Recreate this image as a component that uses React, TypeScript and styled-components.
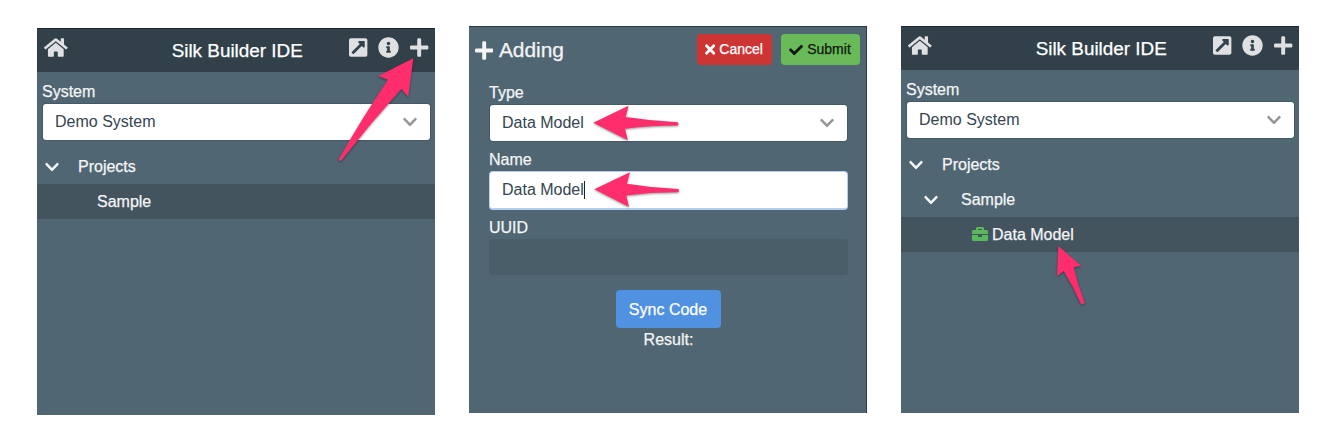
import React from "react";
import styled, { createGlobalStyle } from "styled-components";
import {
  FaHome,
  FaExternalLinkSquareAlt,
  FaInfoCircle,
  FaPlus,
  FaChevronDown,
  FaTimes,
  FaCheck,
  FaBriefcase,
} from "react-icons/fa";

const GlobalStyle = createGlobalStyle`
  *, *::before, *::after { box-sizing: border-box; }
  body {
    margin: 0;
    background: #fff;
    font-family: "Liberation Sans", Arial, sans-serif;
    font-size: 16px;
    -webkit-font-smoothing: antialiased;
    -webkit-text-stroke: 0.25px currentColor;
  }
`;

const Page = styled.main`
  position: relative;
  display: flex;
  align-items: flex-start;
  gap: 34px;
  width: 1326px;
  height: 442px;
  padding: 26px 27px 0 37px;
  overflow: hidden;
`;

const Panel = styled.section<{ $drop?: number; $edge?: boolean }>`
  flex: none;
  width: 398px;
  height: 387px;
  margin-top: ${(p) => p.$drop ?? 0}px;
  background: #506673;
  color: #f4f5f6;
  box-shadow: inset ${(p) => (p.$edge ? "-1px" : "0")} 1px 0 #2b383f;
`;

const TitleBar = styled.header`
  display: grid;
  grid-template-columns: 1fr auto 1fr;
  align-items: center;
  height: 44px;
  padding: 0 6.5px 7px 7px;
  border-top: 1px solid #1b262d;
  background: #324149;
  color: #dfe0e1;

  svg { display: block; }
`;

const Title = styled.h1`
  margin: 7px 0 0 2px;
  color: #fff;
  font-size: 18.9px;
  font-weight: 400;
  line-height: 24px;
`;

const Actions = styled.div`
  display: flex;
  justify-content: flex-end;
  gap: 10.8px;
`;

const SystemField = styled.div`
  padding: 8px 5px 9px 6px;
`;

const Label = styled.div<{ $shift?: number; $height?: number }>`
  height: ${(p) => p.$height ?? 24}px;
  margin-left: ${(p) => p.$shift ?? 0}px;
  line-height: 24px;
`;

const Select = styled.div`
  display: flex;
  align-items: center;
  justify-content: space-between;
  height: 36px;
  padding: 0 13.5px 0 12px;
  border-radius: 3px;
  background: #fff;
  box-shadow: 0 0 0 1px rgba(50, 65, 73, 0.35);
  color: #34454f;
  line-height: 35px;
  -webkit-text-stroke: 0;

  span { height: 36px; }
  svg { color: #939698; }
`;

const TreeRow = styled.div<{ $level: number; $selected?: boolean }>`
  display: flex;
  align-items: center;
  height: 35px;
  padding-left: ${(p) => 8 + p.$level * 15}px;
  background: ${(p) => (p.$selected ? "#43545f" : "transparent")};
  line-height: 35px;
`;

const Twisty = styled.span<{ $level: number }>`
  display: flex;
  align-items: center;
  width: ${(p) => 33 + p.$level * 4}px;
  height: 32px;
`;

const ModelIcon = styled(FaBriefcase)`
  margin: 0 4px 1px 26px;
  color: #58b85a;
`;

const FormBar = styled.header`
  display: flex;
  align-items: flex-start;
  height: 55px;
  padding: 8px 7px 0 6px;
`;

const FormTitle = styled.h2`
  display: flex;
  align-items: center;
  flex: 1;
  gap: 5.5px;
  height: 32px;
  margin: 0;
  font-size: 20.9px;
  font-weight: 400;
`;

const SmallButton = styled.button<{ $bg: string; $fg: string; $width: number }>`
  display: flex;
  align-items: center;
  justify-content: center;
  gap: 4px;
  width: ${(p) => p.$width}px;
  height: 31px;
  margin-left: 9px;
  padding: 0 0 0 0;
  border: 0;
  border-radius: 4px;
  background: ${(p) => p.$bg};
  color: ${(p) => p.$fg};
  font: 14px/31px "Liberation Sans", Arial, sans-serif;

  svg { margin-left: -1px; }
`;

const Form = styled.div`
  display: flex;
  flex-direction: column;
  padding: 0 19px 0 20px;

  ${Select} { margin: 0 1px 7px; }
`;

const Input = styled.div`
  display: flex;
  align-items: center;
  height: 39px;
  margin-bottom: 6px;
  padding: 0 12px 1px;
  border: 1px solid #b4cff0;
  border-bottom-width: 2px;
  border-radius: 4px;
  background: #fff;
  color: #34454f;
  -webkit-text-stroke: 0;
`;

const Caret = styled.i`
  width: 1px;
  height: 18px;
  background: #222;
`;

const Disabled = styled.div`
  height: 36px;
  border-radius: 4px;
  background: #4a5e6a;
`;

const SyncButton = styled.button`
  align-self: center;
  width: 105px;
  height: 38px;
  margin: 15px 0 0 -1px;
  padding: 0;
  border: 0;
  border-radius: 4px;
  background: #5091e1;
  color: #fff;
  font: 16px/37px "Liberation Sans", Arial, sans-serif;
`;

const Result = styled.div`
  align-self: center;
  line-height: 24px;
`;

const Pointers = styled.svg`
  position: absolute;
  inset: 0;
  pointer-events: none;
  filter: drop-shadow(0 1px 1px rgba(0, 0, 0, 0.4));
`;

function Glyph({ icon: Icon, ratio = 0.875, size }: { icon: React.ElementType; ratio?: number; size: number }) {
  return <Icon style={{ width: size * ratio, height: size }} />;
}

function SystemHead() {
  return (
    <>
      <TitleBar>
        <Glyph icon={FaHome} ratio={1.125} size={21} />
        <Title>Silk Builder IDE</Title>
        <Actions>
          <Glyph icon={FaExternalLinkSquareAlt} size={21} />
          <Glyph icon={FaInfoCircle} ratio={1} size={21} />
          <Glyph icon={FaPlus} size={21} />
        </Actions>
      </TitleBar>
      <SystemField>
        <Label $shift={-1}>System</Label>
        <Select>
          <span>Demo System</span>
          <Glyph icon={FaChevronDown} size={16} />
        </Select>
      </SystemField>
    </>
  );
}

function Branch({ level, children }: { level: number; children: React.ReactNode }) {
  return (
    <TreeRow $level={level}>
      <Twisty $level={level}>
        <Glyph icon={FaChevronDown} size={16} />
      </Twisty>
      {children}
    </TreeRow>
  );
}

export default function App() {
  return (
    <>
      <GlobalStyle />
      <Page>
        <Panel $drop={2}>
          <SystemHead />
          <Branch level={0}>Projects</Branch>
          <TreeRow $level={3.467} $selected>Sample</TreeRow>
        </Panel>

        <Panel $edge>
          <FormBar>
            <FormTitle>
              <Glyph icon={FaPlus} size={21} />
              Adding
            </FormTitle>
            <SmallButton $bg="#cd3534" $fg="#fff" $width={75}>
              <Glyph icon={FaTimes} ratio={0.6875} size={15} />
              Cancel
            </SmallButton>
            <SmallButton $bg="#69bb59" $fg="#10180f" $width={79}>
              <Glyph icon={FaCheck} ratio={1} size={14} />
              Submit
            </SmallButton>
          </FormBar>
          <Form>
            <Label>Type</Label>
            <Select>
              <span>Data Model</span>
              <Glyph icon={FaChevronDown} size={16} />
            </Select>
            <Label $height={23}>Name</Label>
            <Input>
              Data Model
              <Caret />
            </Input>
            <Label $height={23}>UUID</Label>
            <Disabled />
            <SyncButton>Sync Code</SyncButton>
            <Result>Result:</Result>
          </Form>
        </Panel>

        <Panel>
          <SystemHead />
          <Branch level={0}>Projects</Branch>
          <Branch level={1}>Sample</Branch>
          <TreeRow $level={2.467} $selected>
            <ModelIcon />
            Data Model
          </TreeRow>
        </Panel>

        <Pointers width="1326" height="442" viewBox="0 0 1326 442" fill="#ff2d6c">
          <path d="M413.3 58.3 L408.3 96.7 L401.3 89 Q370 124 341.5 160.3 Q339.5 161.8 338.6 159.5 Q362 118 388 79.7 L378.3 76 Z" />
          <path d="M593.3 122.7 L628.5 105.7 L625.7 117 Q652 121 677.5 122.3 Q679.5 124 677.5 125.5 Q652 125.5 625 128.7 L627.8 140.3 Z" />
          <path d="M594.3 189.2 L629.9 172.2 L626.9 183.7 Q653 188 678.3 189 Q680 190.7 678.3 192.2 Q652 192 626.3 195.5 L629 207 Z" />
          <path d="M1058.3 246 L1081 265.7 L1073.7 267.3 Q1078 286 1084.7 302.8 Q1083.5 304.8 1081.2 304.2 Q1073.5 287 1063.7 271 L1057 276.3 Z" />
        </Pointers>
      </Page>
    </>
  );
}
